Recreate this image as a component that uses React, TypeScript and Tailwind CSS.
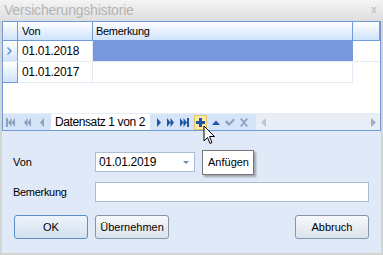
import React from "react"

const font = { fontFamily: '"Liberation Sans", Arial, sans-serif' }

function NavIcon({ d, color = "#1f55a8" }: { d: string; color?: string }) {
  return (
    <svg width="10" height="9" viewBox="0 0 10 9" className="shrink-0">
      <path d={d} fill={color} />
    </svg>
  )
}

export default function App() {
  return (
    <div className="w-[383px] h-[255px] bg-white overflow-hidden text-[11px] text-black whitespace-nowrap" style={font}>
      <div className="relative h-[21px] bg-gradient-to-b from-[#f4f4f4] to-[#dedede] flex items-center pl-[4px]">
        <span className="text-[14px] text-[#b4b4b4] tracking-[-0.2px]">Versicherungshistorie</span>
        <svg className="absolute right-[6px] top-[7px]" width="6" height="6" viewBox="0 0 6 6">
          <path d="M0 0H2L3 1.5L4 0H6L4 3L6 6H4L3 4.5L2 6H0L2 3Z" fill="#c8c8c8" />
        </svg>
      </div>
      <div className="h-[234px] bg-[#dfe9f8] border-l-2 border-r-2 border-b-2 border-[#d4d4d4] relative">
        {/* grid */}
        <div className="w-[379px] h-[110px] border border-[#6f9bd8] bg-white flex flex-col">
          <div className="flex h-[19px] bg-gradient-to-b from-white to-[#cfe3fc] border-b border-[#6f9bd8]">
            <div className="w-[15px] border-r border-[#6f9bd8]" />
            <div className="w-[75px] border-r border-[#6f9bd8] pl-[4px] leading-[18px] tracking-[-0.2px]">Von</div>
            <div className="w-[260px] border-r border-[#6f9bd8] pl-[3px] leading-[18px] tracking-[-0.3px]">Bemerkung</div>
            <div className="flex-1 border-r border-[#6f9bd8]" />
          </div>
          <div className="flex h-[21px] border-b border-[#e4ebf7]">
            <div className="w-[15px] border-r border-[#6f9bd8] bg-gradient-to-b from-white to-[#cfe3fc] flex items-center justify-center">
              <svg width="6" height="8" viewBox="0 0 6 8"><path d="M1 0 L5 4 L1 8 L0 7 L3 4 L0 1Z" fill="#5b8fd0" /></svg>
            </div>
            <div className="w-[75px] border-r border-[#e4ebf7] pl-[4px] leading-[20px] text-[12px] tracking-[-0.3px]">01.01.2018</div>
            <div className="w-[260px] bg-[#7897dd]" />
          </div>
          <div className="flex h-[21px]">
            <div className="w-[15px] border-r border-b border-[#6f9bd8] bg-gradient-to-b from-white to-[#cfe3fc]" />
            <div className="w-[75px] border-r border-b border-[#e4ebf7] pl-[4px] leading-[20px] text-[12px] tracking-[-0.3px]">01.01.2017</div>
            <div className="w-[260px] border-r border-b border-[#e4ebf7]" />
          </div>
          <div className="flex-1" />
          <div className="h-[17px] flex items-center bg-[#eaf0f9] border-t border-[#e8edf5]">
            <div className="w-[48px] h-full flex items-center gap-[7px] pl-[3px] bg-[#d6e4f7]">
              <NavIcon color="#8ea2c0" d="M0 0H2V9H0Z M2 4.5L5.5 0V9Z M5.5 4.5L9 0V9Z" />
              <NavIcon color="#8ea2c0" d="M1 4.5L4.5 0V9Z M4.5 4.5L8 0V9Z" />
              <svg width="5" height="9" viewBox="0 0 5 9"><path d="M4 0V9L0 4.5Z" fill="#8ea2c0" /></svg>
            </div>
            <div className="w-[99px] h-full bg-white pl-[4px] leading-[16px] text-[12px] tracking-[-0.4px]">Datensatz 1 von 2</div>
            <div className="w-[106px] h-full flex items-center gap-[4px] pl-[7px] bg-[#d6e4f7]">
              <svg width="5" height="9" viewBox="0 0 5 9"><path d="M0 0L4 4.5L0 9Z" fill="#1f55a8" /></svg>
              <NavIcon d="M1 0L4.5 4.5L1 9Z M4.5 0L8 4.5L4.5 9Z" />
              <NavIcon d="M0 0L3.5 4.5L0 9Z M3.5 0L7 4.5L3.5 9Z M7 0H9V9H7Z" />
              <div className="w-[13px] h-[15px] bg-[#fdeaa0] border border-[#e2c56a] flex items-center justify-center">
                <svg width="9" height="9" viewBox="0 0 9 9"><path d="M3 0H6V3H9V6H6V9H3V6H0V3H3Z" fill="#1f55a8" /></svg>
              </div>
              <NavIcon d="M1 7L5 2.5L9 7Z" />
              <NavIcon color="#8ea2c0" d="M0 4L2 2L4 5L8.5 0.5L10 2L4 8Z" />
              <NavIcon color="#8ea2c0" d="M1 1L2.5 0L5 3L7.5 0L9 1L6 4.5L9 8L7.5 9L5 6L2.5 9L1 8L4 4.5Z" />
            </div>
            <div className="flex-1 h-full flex items-center justify-between pl-[5px] pr-[3px] bg-[#e9eef6]">
              <svg width="6" height="9" viewBox="0 0 6 9"><path d="M5 0V9L0 4.5Z" fill="#bcc8da" /></svg>
              <svg width="6" height="9" viewBox="0 0 6 9"><path d="M0 0V9L5 4.5Z" fill="#9fb0c8" /></svg>
            </div>
          </div>
        </div>

        {/* form */}
        <div className="flex items-center mt-[21px] h-[20px]">
          <div className="w-[93px] pl-[11px]">Von</div>
          <div className="w-[100px] h-[20px] bg-white border border-[#a9bfd8] flex items-center justify-between pl-[3px] pr-[5px]">
            <span className="text-[12px] tracking-[-0.3px]">01.01.2019</span>
            <svg width="6" height="3" viewBox="0 0 6 3"><path d="M0 0H6L3 3Z" fill="#6f8bb4" /></svg>
          </div>
        </div>
        <div className="flex items-center mt-[10px] h-[20px]">
          <div className="w-[93px] pl-[11px] tracking-[-0.3px]">Bemerkung</div>
          <div className="w-[274px] h-[20px] bg-white border border-[#a9bfd8]" />
        </div>
        <div className="flex items-center mt-[13px] pl-[12px] pr-[12px]">
          <button className="w-[74px] h-[24px] rounded-[3px] border border-[#5d8ec6] bg-gradient-to-b from-[#eef4fb] to-[#d3e0ef] text-[11px]">OK</button>
          <button className="ml-[7px] w-[74px] h-[24px] rounded-[3px] border border-[#8596ad] bg-gradient-to-b from-[#f6f8fb] to-[#dce3ec] text-[11px]">Übernehmen</button>
          <div className="flex-1" />
          <button className="w-[74px] h-[24px] rounded-[3px] border border-[#8596ad] bg-gradient-to-b from-[#f6f8fb] to-[#dce3ec] text-[11px]">Abbruch</button>
        </div>

        {/* tooltip */}
        <div className="absolute left-[200px] top-[129px] w-[52px] h-[25px] bg-white border border-[#767676] shadow-[2px_2px_2px_rgba(0,0,0,0.3)] pl-[5px] leading-[23px]">Anfügen</div>
        {/* cursor */}
        <svg className="absolute left-[201px] top-[104px]" width="13" height="20" viewBox="0 0 13 20">
          <path d="M1 1V16L4.5 12.5L7 18.5L9 17.5L6.5 11.5H11.5Z" fill="#fff" stroke="#000" strokeWidth="1" />
        </svg>
      </div>
    </div>
  )
}
